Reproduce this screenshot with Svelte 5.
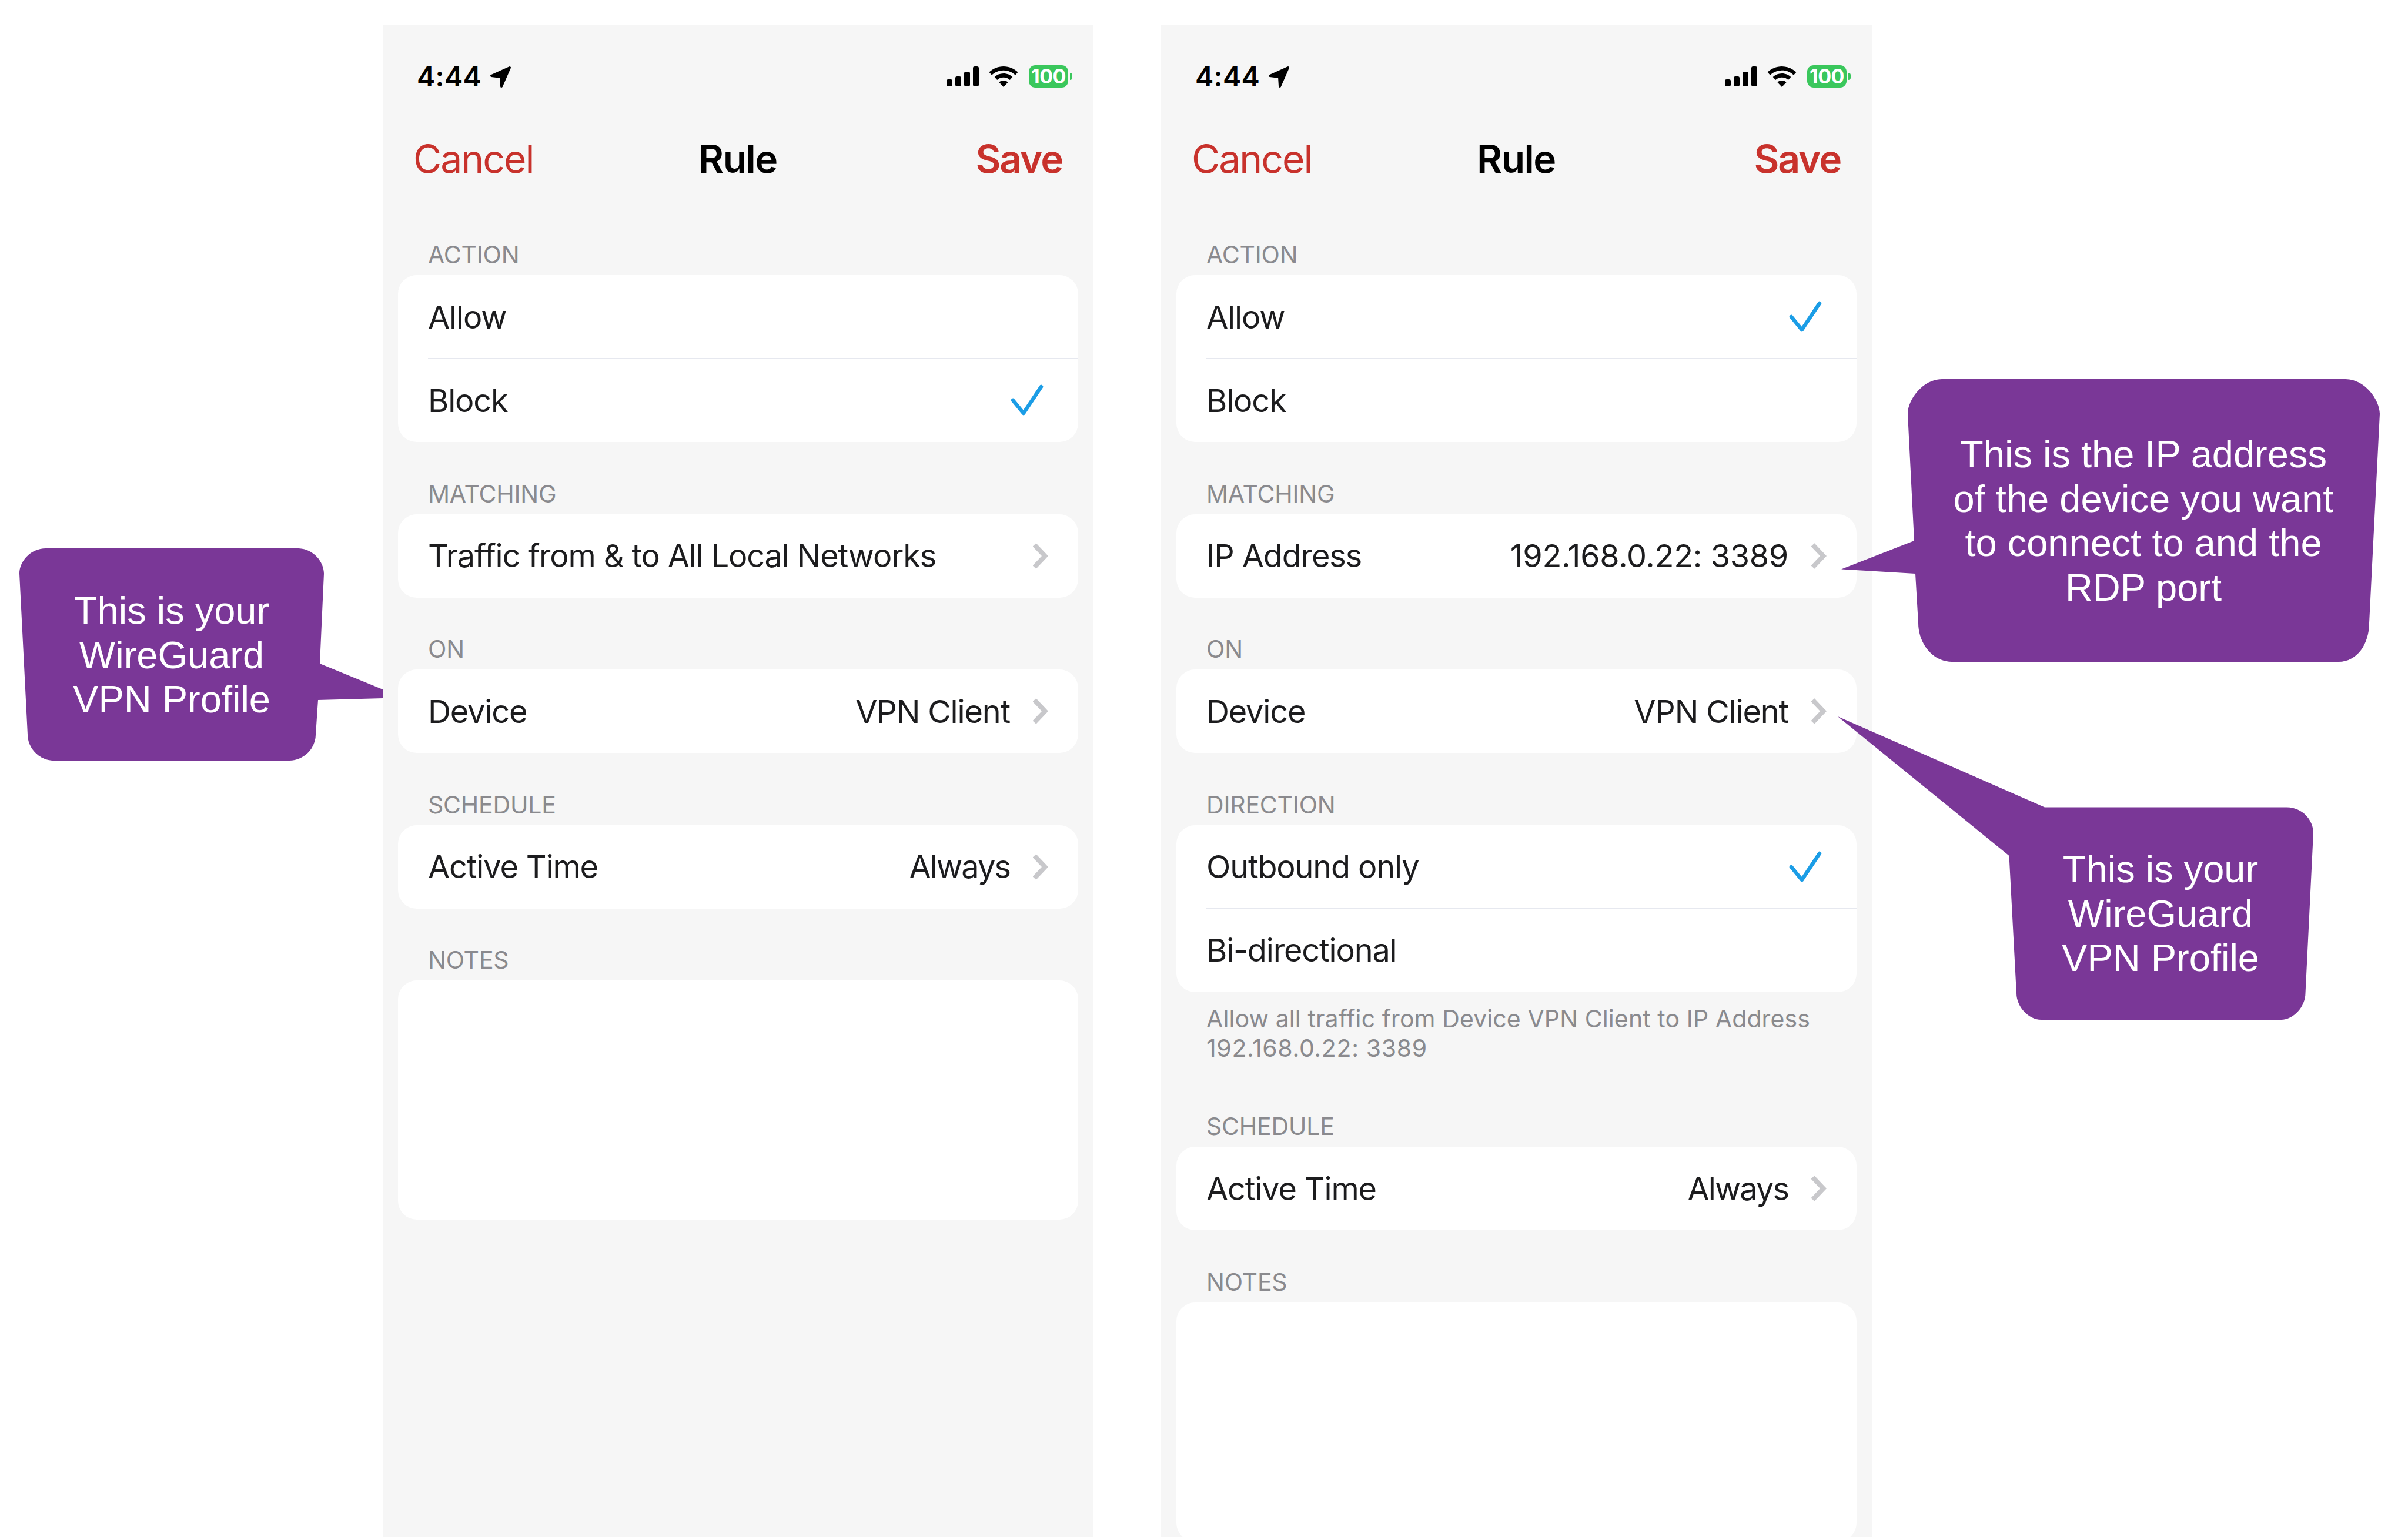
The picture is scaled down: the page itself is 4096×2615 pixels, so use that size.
<script>
  const sections1 = [
    { label: 'ACTION', rows: [{ t: 'Allow' }, { t: 'Block', check: true }] },
    { label: 'MATCHING', rows: [{ t: 'Traffic from & to All Local Networks', chev: true }] },
    { label: 'ON', rows: [{ t: 'Device', v: 'VPN Client', chev: true }] },
    { label: 'SCHEDULE', rows: [{ t: 'Active Time', v: 'Always', tight: true, chev: true }] },
    { label: 'NOTES', notes: true }
  ];
  const sections2 = [
    { label: 'ACTION', rows: [{ t: 'Allow', check: true }, { t: 'Block' }] },
    { label: 'MATCHING', rows: [{ t: 'IP Address', v: '192.168.0.22: 3389', num: true, chev: true }] },
    { label: 'ON', rows: [{ t: 'Device', v: 'VPN Client', chev: true }] },
    { label: 'DIRECTION', rows: [{ t: 'Outbound only', check: true }, { t: 'Bi-directional' }],
      foot: ['Allow all traffic from Device VPN Client to IP Address', '192.168.0.22: 3389'] },
    { label: 'SCHEDULE', rows: [{ t: 'Active Time', v: 'Always', tight: true, chev: true }] },
    { label: 'NOTES', notes: true }
  ];
  const phones = [sections1, sections2];
  const callouts = [
    { cls: 'c1', lines: ['This is your', 'WireGuard', 'VPN Profile'] },
    { cls: 'c2', lines: ['This is the IP address', 'of the device you want', 'to connect to and the', 'RDP port'] },
    { cls: 'c3', lines: ['This is your', 'WireGuard', 'VPN Profile'] }
  ];
</script>

<div class="page">
  {#each phones as sections}
    <section class="phone">
      <div class="status">
        <div class="time">
          <span>4:44</span>
          <svg class="loc" width="38" height="38" viewBox="0 0 38 38"><path d="M35 3 4 17 20 19 21 35Z" fill="#000" stroke="#000" stroke-width="4" stroke-linejoin="round"/></svg>
        </div>
        <div class="indicators">
          <svg width="56" height="35" viewBox="0 0 56 35"><rect x="0" y="22" width="10" height="12" rx="3"/><rect x="15" y="17" width="10" height="17" rx="3"/><rect x="30" y="9" width="10" height="25" rx="3"/><rect x="45" y="0" width="10" height="34" rx="3"/></svg>
          <svg class="wifi" width="50" height="35" viewBox="0 0 50 35"><path d="M25 0C15.500 0 7 3.800 0.500 9.800L5 14.800C10.200 9.800 17.200 6.800 25 6.800s14.800 3 20 8l4.500-5C43 3.800 34.500 0 25 0z"/><path d="M25 12c-6 0-11.300 2.300-15.300 6l4.500 5c2.800-2.700 6.500-4.200 10.800-4.200s8 1.500 10.800 4.200l4.500-5C36.300 14.300 31 12 25 12z"/><path d="M25 24c-3 0-5.600 1.100-7.600 3L25 35l7.600-8c-2-1.900-4.600-3-7.600-3z"/></svg>
          <div class="battery"><span class="level">100</span><span class="nub"></span></div>
        </div>
      </div>
      <nav class="nav"><span class="cancel">Cancel</span><span class="title">Rule</span><span class="save">Save</span></nav>
      <div class="form">
        {#each sections as s}
          <div class="group">
            <div class="label">{s.label}</div>
            {#if s.notes}
              <div class="card notes"></div>
            {:else}
              <div class="card">
                {#each s.rows as r}
                  <div class="row">
                    <span class="name">{r.t}</span>
                    {#if r.v}<span class="value" class:num={r.num} class:tight={r.tight}>{r.v}</span>{/if}
                    {#if r.chev}
                      <svg class="chev" width="26" height="44" viewBox="0 0 26 44"><path d="M2.500 3 20.500 22 2.500 41" fill="none" stroke="#c8c8cb" stroke-width="8"/></svg>
                    {/if}
                    {#if r.check}
                      <svg class="check" width="60" height="60" viewBox="0 0 60 60"><path d="M8 30 26 52 56 7" fill="none" stroke="#1b9de6" stroke-width="6.500" stroke-linecap="round" stroke-linejoin="round"/></svg>
                    {/if}
                  </div>
                {/each}
              </div>
            {/if}
            {#if s.foot}
              <div class="foot">
                <div>{s.foot[0]}</div>
                <div class="num">{s.foot[1]}</div>
              </div>
            {/if}
          </div>
        {/each}
      </div>
    </section>
  {/each}

  <svg class="shapes" width="4096" height="2615" viewBox="0 0 4096 2615" aria-hidden="true">
    <path d="M78 933H506C532 933 551 955 551 976L544 1129 651 1173V1188L541 1191 537 1250C537 1272 518 1294 492 1294H92C66 1294 47 1272 47 1250L33 976C33 955 52 933 78 933Z"/>
    <path d="M3303 645H3990C4022 645 4048 680 4048 704L4030 1060C4030 1095 4010 1126 3978 1126H3320C3288 1126 3263 1095 3263 1060L3258 976 3132 968.500 3256 920 3245 704C3245 680 3271 645 3303 645Z"/>
    <path d="M3126 1219 3478 1373.500H3890C3916 1373.500 3935 1395 3935 1417L3921.500 1690C3921.500 1712 3902 1735 3880 1735H3472C3450 1735 3430 1712 3430 1690L3417.500 1456Z"/>
  </svg>
  {#each callouts as c}
    <div class="callout {c.cls}">{#each c.lines as l}<div>{l}</div>{/each}</div>
  {/each}
</div>

<style>
  :global(body) { margin: 0; background: #fff; }
  .page {
    position: relative;
    width: 4096px;
    height: 2615px;
    overflow: hidden;
    display: flex;
    gap: 115px;
    padding: 42px 0 0 651px;
    box-sizing: border-box;
    font-family: Inter, "Liberation Sans", sans-serif;
    background: #fff;
  }
  .phone {
    width: 1209px;
    height: 2573px;
    flex: none;
    background: #f6f6f6;
    overflow: hidden;
  }
  .status {
    height: 110px;
    margin-top: 49px;
    padding: 0 36px 0 58px;
    display: flex;
    justify-content: space-between;
    align-items: flex-start;
  }
  .time { display: flex; gap: 13px; font-size: 47px; font-weight: 600; line-height: 78px; color: #000; align-items: flex-start; letter-spacing: 0.300px; }
  .loc { margin-top: 21px; }
  .indicators { display: flex; align-items: flex-start; margin-top: 20px; }
  .indicators svg { fill: #000; margin-top: 2px; }
  .wifi { margin-left: 16px; }
  .battery { display: flex; align-items: center; margin-left: 18px; }
  .level {
    width: 67px; height: 38px; border-radius: 11px; background: #3ac75c; color: #fff;
    font-size: 34px; font-weight: 700; line-height: 38px; text-align: center;
    letter-spacing: -0.500px;
  }
  .nub { width: 4px; height: 12px; margin-left: 3px; background: #3ac75c; border-radius: 0 4px 4px 0; }
  .nav {
    height: 110px;
    margin-top: 14px;
    padding: 0 53px 0 52px;
    display: grid;
    grid-template-columns: 1fr auto 1fr;
    align-items: center;
    font-size: 66px;
    letter-spacing: -1.500px;
  }
  .cancel { color: #c8322c; letter-spacing: -2px; }
  .title { font-weight: 600; color: #000; }
  .save { color: #c8322c; font-weight: 600; text-align: right; letter-spacing: -2.200px; }
  .form { padding: 0 26px; margin-top: 85px; }
  .group { margin-bottom: 64.500px; }
  .label {
    height: 58px; line-height: 46px; padding-left: 51px; font-size: 41px; color: #8a8a8e;
    letter-spacing: -0.200px;
  }
  .card { background: #fff; border-radius: 32px; overflow: hidden; }
  .notes { height: 407px; }
  .row {
    height: 142px;
    padding: 0 51px;
    display: flex;
    align-items: center;
    font-size: 54px;
    color: #1c1c1e;
    letter-spacing: -1.150px;
    box-sizing: border-box;
    position: relative;
  }
  .row + .row::before {
    content: '';
    position: absolute;
    left: 51px; right: 0; top: -1px;
    height: 2px;
    background: #e6e8ef;
  }
  .name { flex: 1; white-space: nowrap; }
  .value { margin-right: 39px; }
  .value.num { letter-spacing: -0.350px; }
  .value.tight { letter-spacing: -1.900px; }
  .check { margin-right: 8px; }
  .foot { padding: 20px 51px 21px; font-size: 41px; line-height: 50px; color: #8a8a8e; letter-spacing: 0.100px; }
  .foot .num { letter-spacing: 0.650px; }
  .shapes { position: absolute; left: 0; top: 0; fill: #7a3797; pointer-events: none; }
  .callout {
    position: absolute;
    color: #fff;
    font-family: "Liberation Sans", Arial, sans-serif;
    font-size: 65px;
    line-height: 75.500px;
    text-align: center;
    white-space: nowrap;
    transform: translateX(-50%);
  }
  .c1 { left: 292px; top: 1001px; }
  .c2 { left: 3646px; top: 735px; }
  .c3 { left: 3675px; top: 1441px; }
</style>
